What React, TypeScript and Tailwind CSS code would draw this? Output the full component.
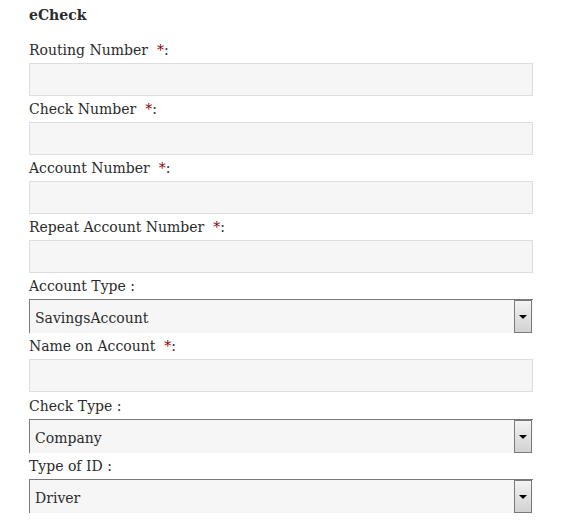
import React from "react";

const font = { fontFamily: '"DejaVu Serif", "Liberation Serif", serif' };

function Label({ text, req }: { text: string; req?: boolean }) {
  return (
    <div className="h-[21px] pt-[6px] leading-[15px] text-[14px] text-[#2b2b2b] whitespace-pre">
      {text}
      {req ? (
        <>
          {"  "}
          <span className="text-[#8b0000]">*</span>:
        </>
      ) : (
        " :"
      )}
    </div>
  );
}

function Input() {
  return <div className="mt-[5px] h-[33px] w-[504px] border border-[#dedede] bg-[#f6f6f6]" />;
}

function Select({ value }: { value: string }) {
  return (
    <div className="mt-[5px] h-[34px] w-[504px] border-t border-l border-[#7a7a7a] bg-[#f6f6f6] flex items-start">
      <span className="flex-1 pl-[5px] pt-[9px] leading-[18px] text-[14px] text-[#2b2b2b]">{value}</span>
      <div className="mr-[1px] h-[33px] w-[18px] border border-[#7a7a7a] bg-gradient-to-b from-[#f3f3f3] to-[#d2d2d2] flex items-center justify-center">
        <div className="w-0 h-0 border-l-[4px] border-r-[4px] border-t-[4px] border-l-transparent border-r-transparent border-t-black" />
      </div>
    </div>
  );
}

export default function App() {
  return (
    <div className="w-[587px] h-[527px] bg-white overflow-hidden" style={font}>
      <div className="pl-[29px] pt-[5px]">
        <div className="h-[20px] leading-[20px] text-[14px] font-bold text-[#2b2b2b]">eCheck</div>
        <div className="mt-[12px]">
          <Label text="Routing Number" req />
          <Input />
        </div>
        <div>
          <Label text="Check Number" req />
          <Input />
        </div>
        <div>
          <Label text="Account Number" req />
          <Input />
        </div>
        <div>
          <Label text="Repeat Account Number" req />
          <Input />
        </div>
        <div>
          <Label text="Account Type" />
          <Select value="SavingsAccount" />
        </div>
        <div>
          <Label text="Name on Account" req />
          <Input />
        </div>
        <div className="mt-[1px]">
          <Label text="Check Type" />
          <Select value="Company" />
        </div>
        <div>
          <Label text="Type of ID" />
          <Select value="Driver" />
        </div>
      </div>
    </div>
  );
}
